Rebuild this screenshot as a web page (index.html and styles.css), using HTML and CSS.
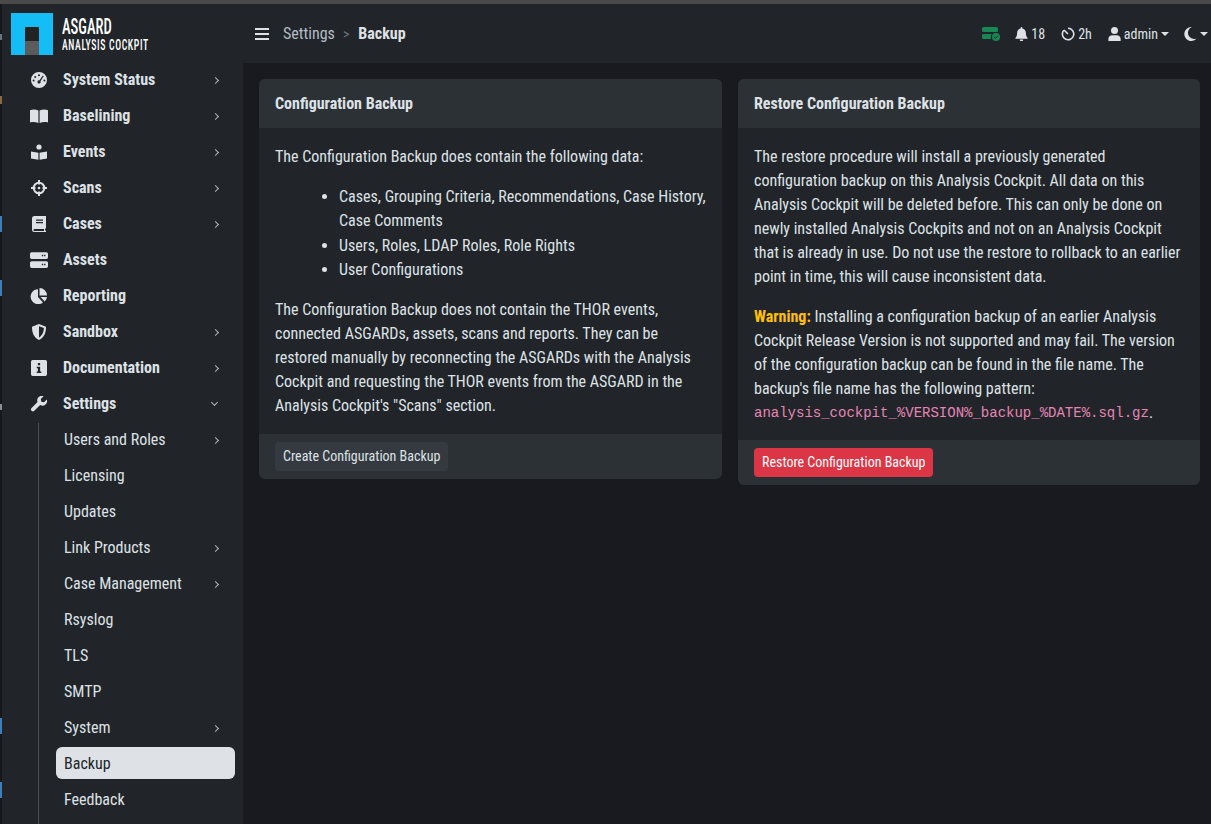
FILE: index.html
```html
<!DOCTYPE html>
<html lang="en">
<head>
    <meta charset="UTF-8">
    <title>Backup - Analysis Cockpit</title>
    <link rel="stylesheet" href="styles.css">
</head>
<body>
    <div class="window-bar"></div>
    <div class="app">
        <div class="window-edge"></div>
        <!-- Sidebar -->
        <aside class="sidebar">
            <div class="brand">
                <svg class="brand-logo" viewBox="0 0 42 42">
                    <rect width="42" height="42" fill="#14bdf5"/>
                    <rect x="14" y="14" width="14" height="14" fill="#222"/>
                    <rect x="14" y="28" width="14" height="14" fill="#5c5c5c"/>
                </svg>
                <div class="brand-text">
                    <div class="brand-top">ASGARD</div>
                    <div class="brand-sub">ANALYSIS COCKPIT</div>
                </div>
            </div>
            <ul class="menu">
                <li class="menu-item">
                    <svg class="menu-icon" viewBox="0 0 16 16"><path fill-rule="evenodd" d="M8 0a8 8 0 1 1 0 16A8 8 0 0 1 8 0zm0 2.2a1 1 0 1 0 0 2 1 1 0 0 0 0-2zM4.2 3.9a1 1 0 1 0 0 2 1 1 0 0 0 0-2zM2.6 7.4a1 1 0 1 0 0 2 1 1 0 0 0 0-2zm10.8 0a1 1 0 1 0 0 2 1 1 0 0 0 0-2zM11.9 3.6 8.3 8.4a1.6 1.6 0 1 0 1.2.9l3.2-5.1z"/></svg>
                    <span>System Status</span><i class="chev"></i>
                </li>
                <li class="menu-item">
                    <svg class="menu-icon" viewBox="0 0 18 14"><path d="M0 1.2C2.5.2 5.6.2 8.4 1.4V14C5.6 12.9 2.5 12.9 0 13.5zM18 1.2C15.5.2 12.4.2 9.6 1.4V14c2.8-1.1 5.900-1.100 8.400-.5z"/></svg>
                    <span>Baselining</span><i class="chev"></i>
                </li>
                <li class="menu-item">
                    <svg class="menu-icon" viewBox="0 0 16 16"><circle cx="8" cy="3" r="2.600"/><path d="M0 7.400 7.400 8.700V15.800L0 14.500zM16 7.400 8.600 8.700V15.800L16 14.500z"/></svg>
                    <span>Events</span><i class="chev"></i>
                </li>
                <li class="menu-item">
                    <svg class="menu-icon" viewBox="0 0 16 16"><circle class="stroke-icon" cx="8" cy="8" r="5.300" stroke-width="2"/><circle cx="8" cy="8" r="1.300"/><path d="M7 0h2v4.500H7zM7 11.500h2V16H7zM0 7h4.500v2H0zM11.500 7H16v2h-4.500z"/></svg>
                    <span>Scans</span><i class="chev"></i>
                </li>
                <li class="menu-item">
                    <svg class="menu-icon" viewBox="0 0 14 16"><path fill-rule="evenodd" d="M2.500 0H14v12.500h-1V14.500h1V16H2.500A2.500 2.500 0 0 1 0 13.500v-11A2.500 2.500 0 0 1 2.500 0zM4 3.500v1.200h7V3.500zM4 6v1.200h7V6zM2.500 13a1 1 0 0 0 0 2H12v-2z"/></svg>
                    <span>Cases</span><i class="chev"></i>
                </li>
                <li class="menu-item">
                    <svg class="menu-icon" viewBox="0 0 16 14"><path fill-rule="evenodd" d="M1.500 0h13A1.500 1.500 0 0 1 16 1.500v3A1.500 1.500 0 0 1 14.500 6h-13A1.500 1.500 0 0 1 0 4.500v-3A1.500 1.500 0 0 1 1.500 0zM10.500 2.400v1.200h1.200V2.400zm2 0v1.200h1.200V2.400zM1.500 8h13A1.500 1.500 0 0 1 16 9.500v3a1.500 1.500 0 0 1-1.500 1.500h-13A1.500 1.500 0 0 1 0 12.500v-3A1.500 1.500 0 0 1 1.500 8zm9 2.400v1.200h1.200v-1.200zm2 0v1.200h1.200v-1.200z"/></svg>
                    <span>Assets</span>
                </li>
                <li class="menu-item">
                    <svg class="menu-icon" viewBox="0 0 16 16"><path d="M7 1.200V9l5 5.400A7.500 7.500 0 1 1 7 1.200zM8.500 0A7.500 7.500 0 0 1 16 7.500H8.500zM9.500 9H16a7.500 7.500 0 0 1-2.300 4.500z"/></svg>
                    <span>Reporting</span>
                </li>
                <li class="menu-item">
                    <svg class="menu-icon" viewBox="0 0 16 16"><path fill-rule="evenodd" d="M8 0l7 2.700c0 6-1.800 10.800-7 13.300-5.200-2.500-7-7.300-7-13.300zm0 2.200v11.500c3.300-2 4.800-5.500 4.900-9.600z"/></svg>
                    <span>Sandbox</span><i class="chev"></i>
                </li>
                <li class="menu-item">
                    <svg class="menu-icon" viewBox="0 0 14 14"><path fill-rule="evenodd" d="M1.500 0h11A1.500 1.500 0 0 1 14 1.500v11a1.500 1.500 0 0 1-1.500 1.500h-11A1.500 1.500 0 0 1 0 12.500v-11A1.500 1.500 0 0 1 1.500 0zM6 2.700v1.900h2V2.700zM5 6v1.300h1v2.700H5v1.300h4V10H8V6z"/></svg>
                    <span>Documentation</span><i class="chev"></i>
                </li>
                <li class="menu-item">
                    <svg class="menu-icon" viewBox="0 0 16 16"><path d="M15.800 3.400 13 6.200l-2.700-.5-.5-2.700L12.600.2A4.600 4.600 0 0 0 6.500 6L.6 12a1.900 1.900 0 0 0 2.700 2.800L9.200 9a4.600 4.600 0 0 0 6.600-5.600z"/></svg>
                    <span>Settings</span><i class="chev open"></i>
                </li>
            </ul>
            <ul class="submenu">
                <li class="sub-item"><span>Users and Roles</span><i class="chev"></i></li>
                <li class="sub-item"><span>Licensing</span></li>
                <li class="sub-item"><span>Updates</span></li>
                <li class="sub-item"><span>Link Products</span><i class="chev"></i></li>
                <li class="sub-item"><span>Case Management</span><i class="chev"></i></li>
                <li class="sub-item"><span>Rsyslog</span></li>
                <li class="sub-item"><span>TLS</span></li>
                <li class="sub-item"><span>SMTP</span></li>
                <li class="sub-item"><span>System</span><i class="chev"></i></li>
                <li class="sub-item active"><span>Backup</span></li>
                <li class="sub-item"><span>Feedback</span></li>
            </ul>
        </aside>

        <div class="main">
            <!-- Top bar -->
            <header class="topbar">
                <div class="burger"><b></b><b></b><b></b></div>
                <div class="crumb">Settings</div>
                <div class="crumb-sep">&gt;</div>
                <div class="crumb-current">Backup</div>
                <div class="top-right">
                    <svg class="status-icon" viewBox="0 0 18 14"><path fill="#198754" d="M1.500 0h13A1.500 1.500 0 0 1 16 1.500v2A1.500 1.500 0 0 1 14.500 5h-13A1.500 1.500 0 0 1 0 3.500v-2A1.500 1.500 0 0 1 1.500 0zM1.500 7h8.200a5 5 0 0 0-.7 5H1.500A1.500 1.500 0 0 1 0 10.500v-2A1.500 1.500 0 0 1 1.500 7z"/><circle cx="14" cy="10" r="4" fill="#198754"/><path d="M12.200 10l1.300 1.300 2.200-2.400" fill="none" stroke="#212529" stroke-width="1"/></svg>
                    <div class="top-item">
                        <svg class="top-icon" viewBox="0 0 14 16"><path d="M7 0a1 1 0 0 1 1 1v.7c2.400.4 4 2.400 4 4.800 0 3.500 1 4.900 2 6v.9H0v-.9c1-1.100 2-2.500 2-6 0-2.400 1.600-4.400 4-4.800V1a1 1 0 0 1 1-1zM5 14.400h4a2 2 0 0 1-4 0z"/></svg>
                        <span>18</span>
                    </div>
                    <div class="top-item">
                        <svg class="top-icon clock" viewBox="0 0 16 16"><path class="stroke-icon" stroke-width="1.800" d="M8 1.500A6.500 6.500 0 1 1 3.200 3.700"/><path class="stroke-icon" stroke-width="1.800" d="M3.400 3.400 8 8"/></svg>
                        <span>2h</span>
                    </div>
                    <div class="top-item user">
                        <svg class="top-icon" viewBox="0 0 14 16"><circle cx="7" cy="4" r="4"/><path d="M0 16v-2.500C0 11 2 9.300 4.400 9.300h5.200C12 9.300 14 11 14 13.500V16z"/></svg>
                        <span>admin</span><i class="caret"></i>
                    </div>
                    <div class="top-item moon">
                        <svg class="top-icon" viewBox="0 0 14 16"><path d="M8.500 0A8 8 0 1 0 14 13.200 6.800 6.800 0 0 1 8.500 0z"/></svg>
                        <i class="caret"></i>
                    </div>
                </div>
            </header>

            <!-- Page content -->
            <main class="content">
                <section class="card">
                    <div class="card-header">Configuration Backup</div>
                    <div class="card-body">
                        <p>The Configuration Backup does contain the following data:</p>
                        <ul class="data-list">
                            <li>Cases, Grouping Criteria, Recommendations, Case History, Case Comments</li>
                            <li>Users, Roles, LDAP Roles, Role Rights</li>
                            <li>User Configurations</li>
                        </ul>
                        <p>The Configuration Backup does not contain the THOR events, connected ASGARDs, assets, scans and reports. They can be restored manually by reconnecting the ASGARDs with the Analysis Cockpit and requesting the THOR events from the ASGARD in the Analysis Cockpit's "Scans" section.</p>
                    </div>
                    <div class="card-footer"><button class="btn btn-dark">Create Configuration Backup</button></div>
                </section>
                <section class="card">
                    <div class="card-header">Restore Configuration Backup</div>
                    <div class="card-body restore-body">
                        <p>The restore procedure will install a previously generated configuration backup on this Analysis Cockpit. All data on this Analysis Cockpit will be deleted before. This can only be done on newly installed Analysis Cockpits and not on an Analysis Cockpit that is already in use. Do not use the restore to rollback to an earlier point in time, this will cause inconsistent data.</p>
                        <p><strong class="warn">Warning:</strong> Installing a configuration backup of an earlier Analysis Cockpit Release Version is not supported and may fail. The version of the configuration backup can be found in the file name. The backup's file name has the following pattern: <code>analysis_cockpit_%VERSION%_backup_%DATE%.sql.gz</code>.</p>
                    </div>
                    <div class="card-footer"><button class="btn btn-danger">Restore Configuration Backup</button></div>
                </section>
            </main>
        </div>
    </div>
</body>
</html>
```
FILE: styles.css
```css
/* Base */
* {
    margin: 0;
    padding: 0;
    box-sizing: border-box;
}

html, body {
    height: 824px;
    overflow: hidden;
}

body {
    background-color: #212529;
    color: #dee2e6;
    font-family: 'Roboto', 'Liberation Sans', sans-serif;
    font-stretch: condensed;
    font-size: 16px;
    line-height: 24px;
}

ul {
    list-style: none;
}

.window-bar {
    height: 4px;
    background-color: #4a4a4a;
}

.app {
    display: flex;
    height: 820px;
}

/* sliver of the window behind, down the left edge */
.window-edge {
    width: 2px;
    flex-shrink: 0;
    background: linear-gradient(to bottom,
        #14171b 0 30px, #6b7280 30px 36px, #14171b 36px 92px, #8a6a45 92px 100px,
        #14171b 100px 212px, #3f7fb5 212px 228px, #14171b 228px 276px, #3f7fb5 276px 292px,
        #14171b 292px 400px, #8a8f96 400px 406px, #14171b 406px 714px, #3f7fb5 714px 730px,
        #14171b 730px 778px, #3f7fb5 778px 794px, #14171b 794px);
}

/* Sidebar */
.sidebar {
    width: 241px;
    flex-shrink: 0;
    overflow: hidden;
}

.brand {
    display: flex;
    gap: 9px;
    padding: 9px 0 0 9px;
    height: 58px;
}

.brand-logo {
    width: 42px;
    height: 42px;
}

.brand-text {
    color: #fff;
    padding-top: 2px;
}

.brand-top {
    font-size: 22.5px;
    font-weight: 500;
    line-height: 22px;
    transform: scaleX(0.65);
    transform-origin: left;
}

.brand-sub {
    font-size: 15.5px;
    font-weight: 500;
    line-height: 16px;
    letter-spacing: 1px;
    white-space: nowrap;
    transform: scaleX(0.63);
    transform-origin: left;
}

.menu-item {
    display: flex;
    align-items: center;
    height: 36px;
    padding-left: 28px;
    font-weight: 700;
    color: #dee2e6;
}

.menu-icon {
    width: 18px;
    height: 16px;
    margin-right: 15px;
    fill: currentColor;
    color: #dee2e6;
}

.stroke-icon {
    fill: none;
    stroke: currentColor;
}

.chev {
    width: 5px;
    height: 5px;
    margin-left: auto;
    margin-right: 25px;
    border-top: 1px solid #adb5bd;
    border-right: 1px solid #adb5bd;
    transform: rotate(45deg);
}

.chev.open {
    margin-top: -3px;
    margin-right: 26px;
    transform: rotate(135deg);
}

.submenu {
    display: flex;
    flex-direction: column;
    gap: 4px;
    margin-top: 1px;
    margin-left: 36px;
    padding-bottom: 40px;
    border-left: 1px solid #495057;
}

.sub-item {
    display: flex;
    align-items: center;
    flex-shrink: 0;
    height: 32px;
    margin: 0 8px 0 17px;
    padding: 2px 0 0 8px;
    border-radius: 6px;
}

.sub-item .chev {
    margin-right: 17px;
}

.sub-item.active {
    background-color: #dee2e6;
    color: #212529;
}

/* Main area */
.main {
    flex: 1;
    min-width: 0;
}

.topbar {
    display: flex;
    align-items: center;
    height: 59px;
    padding-left: 12px;
}

.burger {
    width: 14px;
    margin-right: 14px;
}

.burger b {
    display: block;
    height: 2px;
    margin: 3px 0;
    background-color: #dee2e6;
}

.crumb {
    color: #b5bcc4;
}

.crumb-sep {
    margin: 0 9px 0 8px;
    color: #6c757d;
    font-size: 14px;
}

.crumb-current {
    font-weight: 700;
}

.top-right {
    display: flex;
    align-items: center;
    margin-left: auto;
    font-size: 14px;
}

.status-icon {
    width: 18px;
    height: 14px;
    margin-right: 15px;
}

.top-item {
    display: flex;
    align-items: center;
    gap: 3px;
    margin-right: 16px;
}

.top-item.user {
    margin-right: 15px;
}

.top-item.moon {
    margin-right: 3px;
}

.top-icon {
    width: 13px;
    height: 14px;
    fill: currentColor;
    color: #dee2e6;
}

.top-icon.clock {
    width: 14px;
}

.caret {
    width: 0;
    height: 0;
    border-left: 4px solid transparent;
    border-right: 4px solid transparent;
    border-top: 4px solid #dee2e6;
}

/* Content */
.content {
    display: grid;
    grid-template-columns: 463px 462px;
    gap: 16px;
    align-items: start;
    height: 761px;
    padding: 16px;
    background-color: #181a1f;
}

.card {
    background-color: #212529;
    border-radius: 6px;
    overflow: hidden;
}

.card-header {
    height: 49px;
    padding: 13px 16px 12px;
    background-color: #2c3135;
    font-weight: 700;
}

.card-body {
    padding: 17px 16px 16px;
}

.restore-body {
    padding-bottom: 15px;
}

.card-body p {
    margin-bottom: 16px;
}

.card-body p:last-child {
    margin-bottom: 0;
}

.data-list {
    list-style: disc;
    margin-bottom: 16px;
    padding-left: 64px;
    line-height: 24.25px;
}

.warn {
    color: #ffc107;
}

code {
    color: #e685b5;
    font-family: 'Liberation Mono', 'DejaVu Sans Mono', monospace;
    font-size: 14px;
    line-height: 1;
    vertical-align: 1px;
}

.card-footer {
    padding: 8px 16px;
    background-color: #2c3135;
}

.btn {
    display: block;
    height: 29px;
    padding: 0 8px 2px;
    border: none;
    border-radius: 4px;
    font: inherit;
    font-size: 14px;
    color: #dee2e6;
}

.btn-dark {
    background-color: #343a40;
}

.btn-danger {
    background-color: #dc3545;
    color: #fff;
}
```
